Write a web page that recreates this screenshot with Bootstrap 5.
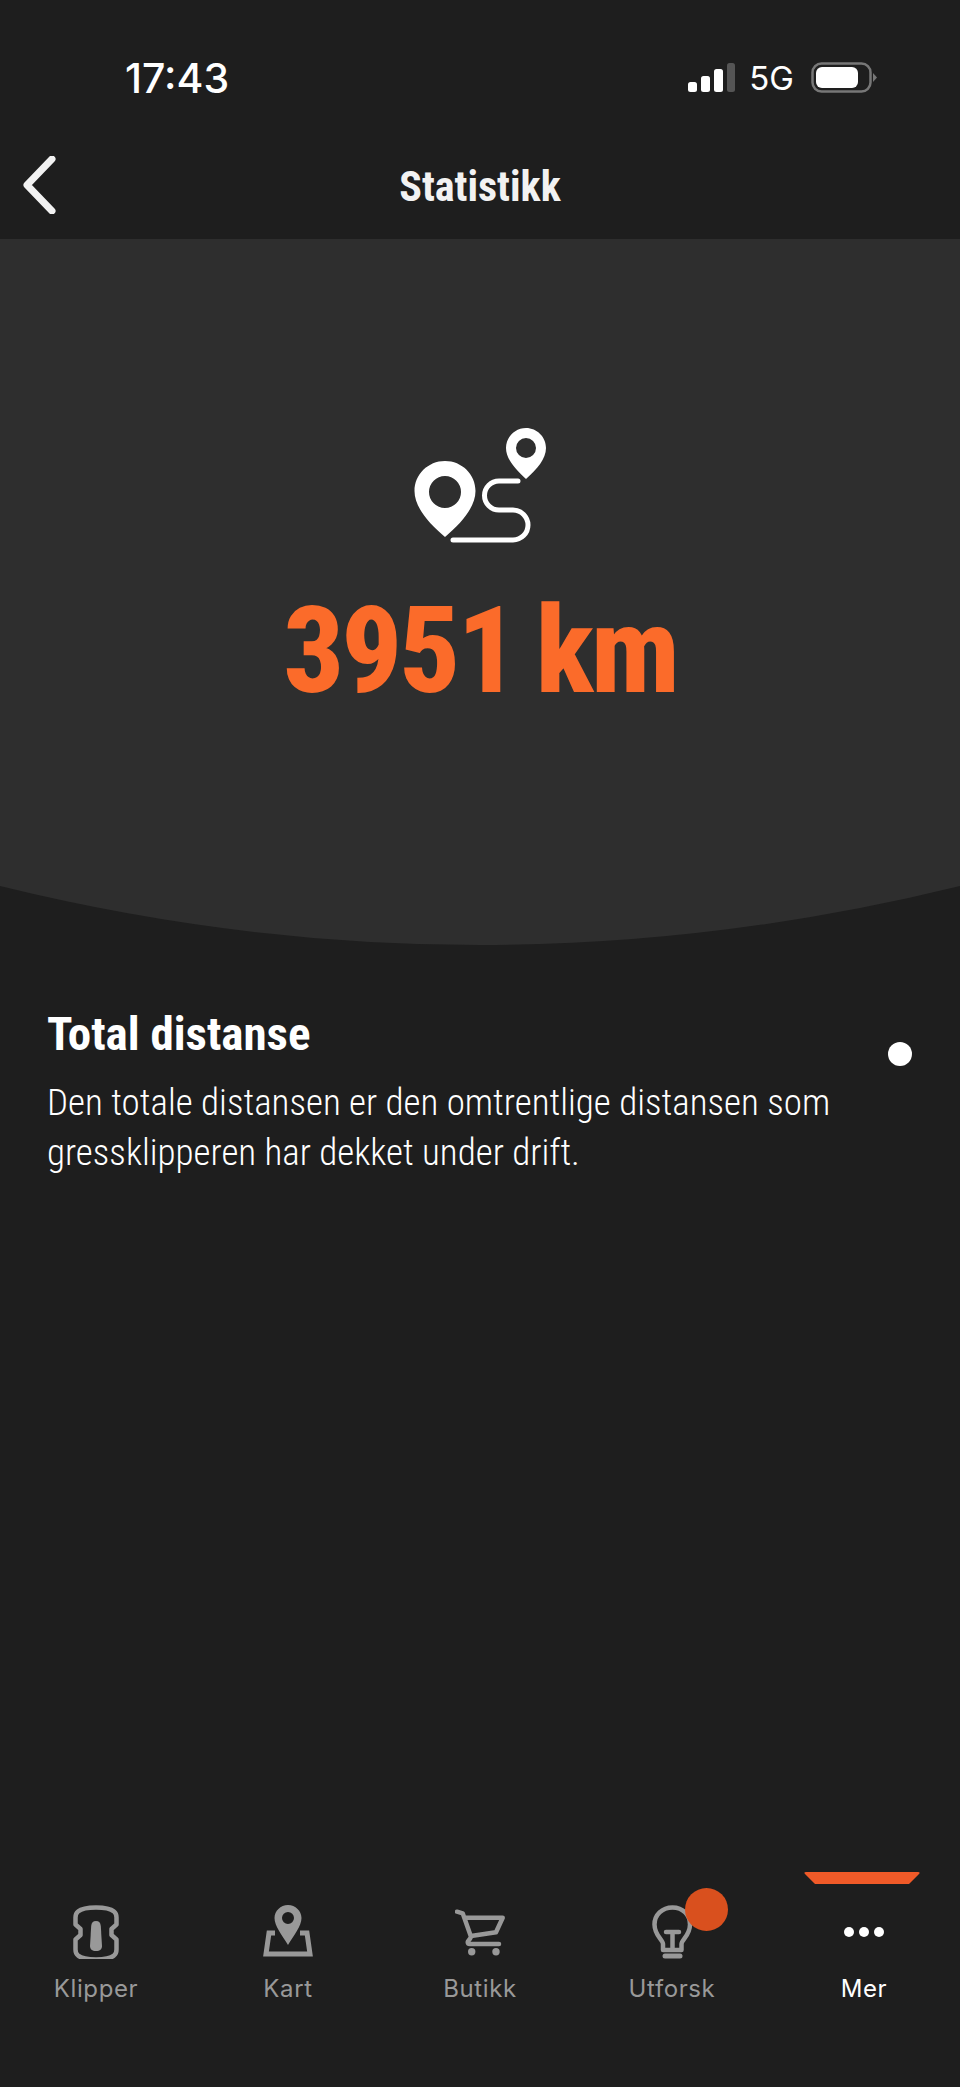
<!DOCTYPE html>
<html lang="en">
<head>
    <meta charset="UTF-8">
    <meta name="viewport" content="width=device-width, initial-scale=1.0">
    <title>Statistikk</title>
    <link href="https://cdn.jsdelivr.net/npm/bootstrap@5.3.3/dist/css/bootstrap.min.css" rel="stylesheet">
    <style>
        body { background: #1e1e1e; color: #fff; font-family: Roboto, "Liberation Sans", sans-serif; }
        .app-screen { height: 2087px; overflow: hidden; }
        .status-row { height: 132px; padding: 54px 83px 0 125px; }
        .status-time { font: 500 41px/48px Inter, sans-serif; }
        .status-net { font: 400 33px/48px Inter, sans-serif; margin: 0 17px 0 13px; }
        .top-title { height: 107px; }
        .top-title h1 { font-size: 42px; font-weight: 700; line-height: 48px; font-stretch: 75%; color: #f2f2f2; margin: 0; padding-top: 31px; }
        .back-btn { left: 22px; top: 24px; }
        .stat-hero { background: #2e2e2e; height: 647px; padding-top: 186px; }
        .stat-value { font-size: 120px; font-weight: 800; line-height: 120px; font-stretch: 75%; letter-spacing: -3px; word-spacing: -4px; color: #fb6b2a; margin-top: 48px; }
        .hero-curve { height: 59px; }
        .info-block { padding: 62px 47px 0; }
        .info-block h2 { font-size: 47px; font-weight: 700; line-height: 54px; font-stretch: 75%; margin: 0 0 17px; }
        .info-block p { font-size: 37px; font-weight: 300; line-height: 50px; font-stretch: 75%; margin: 0; width: 810px; }
        .page-dot { width: 24px; height: 24px; right: 48px; top: 97px; }
        .tab-bar { height: 215px; margin-top: auto; }
        .tab-item { width: 192px; padding-top: 33px; color: #999; font: 400 24px/30px Inter, sans-serif; letter-spacing: .6px; }
        .tab-item.is-active { color: #fff; }
        .tab-icon { height: 54px; margin-bottom: 15px; }
        .tab-marker { left: 36px; top: 0; }
        .tab-badge { width: 43px; height: 43px; background: #d9501e; left: 109px; top: 16px; }
    </style>
</head>
<body>
<div class="app-screen d-flex flex-column">
    <div class="status-row d-flex align-items-start">
        <span class="status-time">17:43</span>
        <div class="d-flex align-items-center ms-auto">
            <svg width="48" height="30" viewBox="0 0 48 30">
                <rect x="0" y="19" width="9" height="10" rx="2.5" fill="#fff"/>
                <rect x="13" y="13" width="9" height="16" rx="2.5" fill="#fff"/>
                <rect x="26" y="6" width="9" height="23" rx="2.5" fill="#fff"/>
                <rect x="39" y="0" width="8" height="29" rx="2.5" fill="#555"/>
            </svg>
            <span class="status-net">5G</span>
            <svg width="66" height="32" viewBox="0 0 66 32">
                <rect x="1.5" y="1.5" width="58" height="28" rx="9" fill="none" stroke="#777" stroke-width="2.5"/>
                <rect x="5" y="5" width="42" height="21" rx="6" fill="#fff"/>
                <path d="M62 11 L66 15.5 L62 20 Z" fill="#777"/>
            </svg>
        </div>
    </div>

    <div class="top-title position-relative d-flex justify-content-center">
        <a class="back-btn position-absolute" href="#">
            <svg width="34" height="58" viewBox="0 0 34 58" class="d-block"><path d="M30 3 L5 29 L30 55" fill="none" stroke="#f2f2f2" stroke-width="7" stroke-linecap="round" stroke-linejoin="round"/></svg>
        </a>
        <h1>Statistikk</h1>
    </div>

    <section class="stat-hero text-center">
        <svg width="140" height="118" viewBox="410 425 140 118" class="d-block mx-auto">
            <path fill-rule="evenodd" fill="#fff" d="M445 461c17 0 30.500 13.500 30.500 30 0 16-14 32-30.500 46-16.500-14-30.500-30-30.500-46 0-16.500 13.500-30 30.500-30zm0 15a16 16 0 1 0 0 32 16 16 0 0 0 0-32z"/>
            <path fill-rule="evenodd" fill="#fff" d="M526 428c11 0 20 9 20 20 0 11-9 21-20 31-11-10-20-20-20-31 0-11 9-20 20-20zm0 10a10 10 0 1 0 0 20 10 10 0 0 0 0-20z"/>
            <path fill="none" stroke="#fff" stroke-width="5" stroke-linecap="round" d="M518 481h-19a14.500 14.500 0 0 0 0 29h14a15 15 0 0 1 0 30h-60"/>
        </svg>
        <div class="stat-value">3951 km</div>
    </section>
    <svg class="hero-curve d-block w-100" viewBox="0 0 960 59" preserveAspectRatio="none"><path d="M0 0 Q480 118 960 0 Z" fill="#2e2e2e"/></svg>

    <section class="info-block position-relative">
        <h2>Total distanse</h2>
        <p>Den totale distansen er den omtrentlige distansen som gressklipperen har dekket under drift.</p>
        <span class="page-dot position-absolute rounded-circle bg-white"></span>
    </section>

    <nav class="tab-bar d-flex">
        <a class="tab-item text-center text-decoration-none">
            <div class="tab-icon">
                <svg width="46" height="54" viewBox="0 0 46 54">
                    <path fill="none" stroke="#999" stroke-width="4.500" stroke-linejoin="round" d="M23 2.500c9 0 15 1.500 18 4 2 1.500 2.500 3 2.500 6v7l-5 4.500v6l5 4.500v10c0 3-.5 4.500-2.500 6-3 2.500-9 4-18 4s-15-1.500-18-4c-2-1.500-2.500-3-2.500-6v-10l5-4.500v-6l-5-4.500v-7c0-3 .5-4.500 2.500-6 3-2.500 9-4 18-4z"/>
                    <path fill="#999" d="M23 16c3 0 4.500 1.500 4.800 5l1.200 20c0 3-2 5-6 5s-6-2-6-5l1.200-20c.3-3.500 1.800-5 4.800-5z"/>
                </svg>
            </div>
            Klipper
        </a>
        <a class="tab-item text-center text-decoration-none">
            <div class="tab-icon">
                <svg width="50" height="54" viewBox="0 0 50 54">
                    <path fill="#999" fill-rule="evenodd" d="M25 0c7.500 0 13.500 6 13.500 13 0 8-7.500 17-13.500 27C19 30 11.500 21 11.500 13 11.500 6 17.500 0 25 0zm0 7a6 6 0 1 0 0 12 6 6 0 0 0 0-12z"/>
                    <path fill="none" stroke="#999" stroke-width="5" d="M12 28H6L3 49h44l-3-21h-7"/>
                </svg>
            </div>
            Kart
        </a>
        <a class="tab-item text-center text-decoration-none">
            <div class="tab-icon">
                <svg width="50" height="54" viewBox="0 0 50 54">
                    <path fill="none" stroke="#999" stroke-width="4.500" stroke-linecap="round" stroke-linejoin="round" d="M2 6.700l5.700 1.600L16 31.700c-1 3-3.300 4-3.300 5.300 0 1.300.8 2 2.300 2h29M9.500 12.700h38.200L41 27.300l-23.300 3.400"/>
                    <circle cx="16.700" cy="46.700" r="3.700" fill="#999"/><circle cx="41" cy="46.700" r="3.700" fill="#999"/>
                </svg>
            </div>
            Butikk
        </a>
        <a class="tab-item text-center text-decoration-none position-relative">
            <div class="tab-icon">
                <svg width="41" height="54" viewBox="0 0 41 54">
                    <path fill="none" stroke="#999" stroke-width="4.500" stroke-linecap="round" stroke-linejoin="round" d="M11 45v-6c0-4-8.500-8.500-8.500-19.500C2.500 10 10 2.500 20.500 2.500S38 10 38 19.500c0 11-8.500 15.500-8.500 19.500v6zM14 27h13M20.500 27v18"/>
                    <path d="M13 51h15" stroke="#999" stroke-width="5" stroke-linecap="round"/>
                </svg>
            </div>
            Utforsk
            <span class="tab-badge position-absolute rounded-circle"></span>
        </a>
        <a class="tab-item is-active text-center text-decoration-none position-relative">
            <svg class="tab-marker position-absolute" width="116" height="12" viewBox="0 0 116 12"><path d="M2 0h112c2 0 2 1 1 2l-9 9c-.5.600-1 1-2 1H12c-1 0-1.500-.4-2-1L1 2C0 1 0 0 2 0z" fill="#f05a28"/></svg>
            <div class="tab-icon">
                <svg width="40" height="54" viewBox="0 0 40 54"><circle cx="5" cy="27" r="5" fill="#fff"/><circle cx="20" cy="27" r="5" fill="#fff"/><circle cx="35" cy="27" r="5" fill="#fff"/></svg>
            </div>
            Mer
        </a>
    </nav>
</div>
<script src="https://cdn.jsdelivr.net/npm/bootstrap@5.3.3/dist/js/bootstrap.bundle.min.js"></script>
</body>
</html>
